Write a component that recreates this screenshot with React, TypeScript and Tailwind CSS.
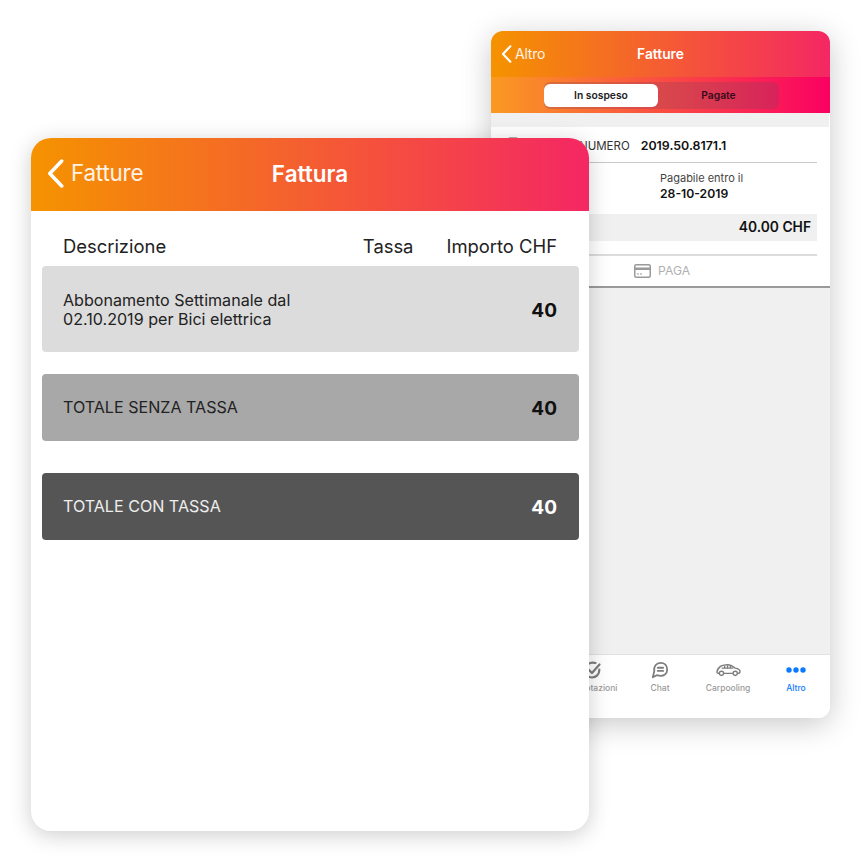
import React from 'react';

const font = { fontFamily: 'Inter, "Noto Sans", sans-serif' };

const Chevron = ({ className }: { className: string }) => (
  <svg viewBox="0 0 16 28" className={className} fill="none" stroke="white" strokeWidth="3.4" strokeLinecap="round" strokeLinejoin="round">
    <path d="M14 2 L2.5 14 L14 26" />
  </svg>
);

const BackWindow = () => (
  <div className="absolute left-[491px] top-[31px] w-[339px] h-[687px] rounded-[12px] bg-white overflow-hidden shadow-[0_6px_30px_rgba(0,0,0,0.22)] flex flex-col">
    <div className="h-[46px] relative flex items-center justify-center bg-linear-to-r/srgb from-[#f59300] to-[#f42763] shrink-0">
      <div className="absolute left-[10px] top-[14px] flex items-center gap-[3px]">
        <Chevron className="w-[11px] h-[18px]" />
        <span className="text-[14px] text-white/90 leading-none tracking-[-0.2px]">Altro</span>
      </div>
      <span className="text-[13.8px] font-semibold text-white">Fatture</span>
    </div>
    <div className="h-[36px] flex items-center pl-[53px] bg-linear-to-r/srgb from-[#fa9a22] to-[#fa0062] shrink-0">
      <div className="w-[235px] h-[27px] rounded-[6px] bg-[#8a4060]/30 flex items-center">
        <div className="w-[114px] h-[23px] rounded-[6px] bg-white flex items-center justify-center text-[10.3px] font-semibold text-[#222] pt-[1px]">In sospeso</div>
        <div className="flex-1 text-center text-[10.3px] font-semibold text-[#3a0a1a] pt-[1px]">Pagate</div>
      </div>
    </div>
    <div className="h-[14px] bg-[#f0f0f0] mr-[1px] shrink-0" />
    <div className="absolute left-[17px] top-[106px] w-[10px] h-[14px] rounded-[2px] bg-[#b0b0b0]" />
    <div className="pl-[90px] pr-[13px] shrink-0">
      <div className="h-[36px] flex items-end pb-[8px] border-b border-[#c8c8c8]">
        <span className="text-[11.5px] leading-[16px] text-[#333] ml-[-2px]">NUMERO</span>
        <span className="text-[12.4px] leading-[16px] font-semibold text-[#111] ml-[11px]">2019.50.8171.1</span>
      </div>
      <div className="h-[51px] pt-[7px] pl-[79px]">
        <div className="text-[11px] leading-[16px] text-[#444]">Pagabile entro il</div>
        <div className="text-[12.2px] leading-[16px] font-semibold text-[#111]">28-10-2019</div>
      </div>
      <div className="h-[27px] bg-[#f0f0f0] flex items-center justify-end pr-[6px] text-[13.8px] font-semibold text-[#111]">40.00 CHF</div>
      <div className="h-[15px] border-b-2 border-[#dcdcdc]" />
    </div>
    <div className="h-[32px] border-b-2 border-[#9a9a9a] flex items-center pl-[143px] gap-[7px] shrink-0">
      <svg viewBox="0 0 17 14" className="w-[17px] h-[14px]" fill="none" stroke="#9a9a9a">
        <rect x="0.75" y="0.75" width="15.5" height="12.5" rx="1.5" strokeWidth="1.5" />
        <rect x="1" y="3.5" width="15" height="2.5" fill="#9a9a9a" stroke="none" />
        <path d="M3 10 h2 M6 10 h2" strokeWidth="1" />
      </svg>
      <span className="text-[12.2px] text-[#b0b0b0]">PAGA</span>
    </div>
    <div className="flex-1 bg-[#f0f0f0]" />
    <div className="h-[64px] border-t border-[#e2e2e2] bg-white flex shrink-0">
      <div className="w-[67px]" />
      <TabItem label="Prenotazioni" icon={<CheckIcon />} />
      <TabItem label="Chat" icon={<ChatIcon />} />
      <TabItem label="Carpooling" icon={<CarIcon />} />
      <TabItem label="Altro" active icon={<DotsIcon />} />
    </div>
  </div>
);

const CheckIcon = () => (
  <svg viewBox="0 0 18 18" className="w-[18px] h-[18px]" fill="none" stroke="#7d7d7d" strokeWidth="2.2" strokeLinecap="round" strokeLinejoin="round">
    <path d="M12.5 2 C7 0.5 1.5 4 1.5 9.5 C1.5 13.5 5 16.5 9 16.5 C13 16.5 16.5 13.5 16.3 8.5" />
    <path d="M5.5 8.5 L9 12 L16.5 3.5" />
  </svg>
);

const ChatIcon = () => (
  <svg viewBox="0 0 20 20" className="w-[18px] h-[18px]" fill="none" stroke="#7d7d7d" strokeWidth="2" strokeLinejoin="round">
    <path d="M2 18 L3.6 11.5 C2.6 6 6 2 10.5 2 C15 2 18 5.2 18 9.5 C18 14 14.5 16.5 10.5 16.5 C8.8 16.5 7.5 16 6.5 15.8 Z" />
    <path d="M7.5 7.5 H13.5 M7.5 11 H13.5" strokeLinecap="round" />
  </svg>
);

const CarIcon = () => (
  <svg viewBox="0 0 26 14" className="w-[25px] h-[14px]" fill="none" stroke="#7d7d7d" strokeWidth="1.4" strokeLinejoin="round">
    <path d="M1 9 C1 6.5 3 4.5 5 3 C7 1.5 13 1 16 2.5 L20 5 C23 5.5 25 6.5 25 8.5 C25 10 24 10.5 22.5 10.5 M17.5 10.5 H8 M3.5 10.5 C2 10.5 1 10.5 1 9" />
    <path d="M6 5 H18 M9 2.5 V5 M12 2 V5 M15 2.5 V5" />
    <circle cx="5.7" cy="10.5" r="2.2" />
    <circle cx="20" cy="10.5" r="2.2" />
  </svg>
);

const DotsIcon = () => (
  <svg viewBox="0 0 20 6" className="w-[20px] h-[6px]" fill="#0a7aff">
    <circle cx="3" cy="3" r="2.7" />
    <circle cx="10" cy="3" r="2.7" />
    <circle cx="17" cy="3" r="2.7" />
  </svg>
);

const TabItem = ({ label, icon, active }: { label: string; icon?: React.ReactNode; active?: boolean }) => (
  <div className="w-[68px] flex flex-col items-center">
    <div className="h-[24px] mt-[3px] flex items-center justify-center">{icon}</div>
    <span className={`text-[8.5px] leading-[12px] font-medium ${active ? 'text-[#0a7aff]' : 'text-[#9a9a9a]'}`}>{label}</span>
  </div>
);

const Row = ({ bg, height, text, children }: { bg: string; height: string; text: string; children: React.ReactNode }) => (
  <div className={`${bg} ${height} ${text} rounded-[4px] flex items-center justify-between pl-[21px] pr-[22px]`}>
    {children}
  </div>
);

const FrontWindow = () => (
  <div className="absolute left-[31px] top-[138px] w-[558px] h-[693px] rounded-[20px] bg-white overflow-hidden shadow-[0_4px_22px_rgba(0,0,0,0.2)]">
    <div className="h-[73px] relative flex items-center justify-center bg-linear-to-r/srgb from-[#f59300] to-[#f42763]">
      <div className="absolute left-[16px] top-[21px] flex items-center gap-[7px]">
        <Chevron className="w-[17px] h-[29px]" />
        <span className="text-[22.4px] leading-none text-white/90 tracking-[-0.2px]">Fatture</span>
      </div>
      <span className="text-[22.5px] font-semibold text-white mt-[-2px]">Fattura</span>
    </div>
    <div className="ml-[11px] mr-[10px]">
      <div className="h-[55px] flex items-end pb-[8px] pl-[21px] pr-[22px] text-[18.4px] leading-[24px] text-[#222]">
        <span>Descrizione</span>
        <span className="ml-auto">Tassa</span>
        <span className="ml-[33px]">Importo CHF</span>
      </div>
      <div className="flex flex-col">
        <Row bg="bg-[#dcdcdc]" height="h-[86px]" text="text-[#222]">
          <span className="text-[16.1px] leading-[19px] mt-[1px]">Abbonamento Settimanale dal<br />02.10.2019 per Bici elettrica</span>
          <span className="text-[19px] font-bold text-[#111] mt-[4px]">40</span>
        </Row>
        <div className="mt-[22px]">
          <Row bg="bg-[#a8a8a8]" height="h-[67px]" text="text-[#222]">
            <span className="text-[16.1px]">TOTALE SENZA TASSA</span>
            <span className="text-[19px] font-bold text-[#111] mt-[4px]">40</span>
          </Row>
        </div>
        <div className="mt-[32px]">
          <Row bg="bg-[#555555]" height="h-[67px]" text="text-white">
            <span className="text-[16.1px] text-white/90">TOTALE CON TASSA</span>
            <span className="text-[19px] font-bold mt-[4px]">40</span>
          </Row>
        </div>
      </div>
    </div>
  </div>
);

export default function App() {
  return (
    <div className="relative w-[863px] h-[863px] bg-white overflow-hidden" style={font}>
      <BackWindow />
      <FrontWindow />
    </div>
  );
}
